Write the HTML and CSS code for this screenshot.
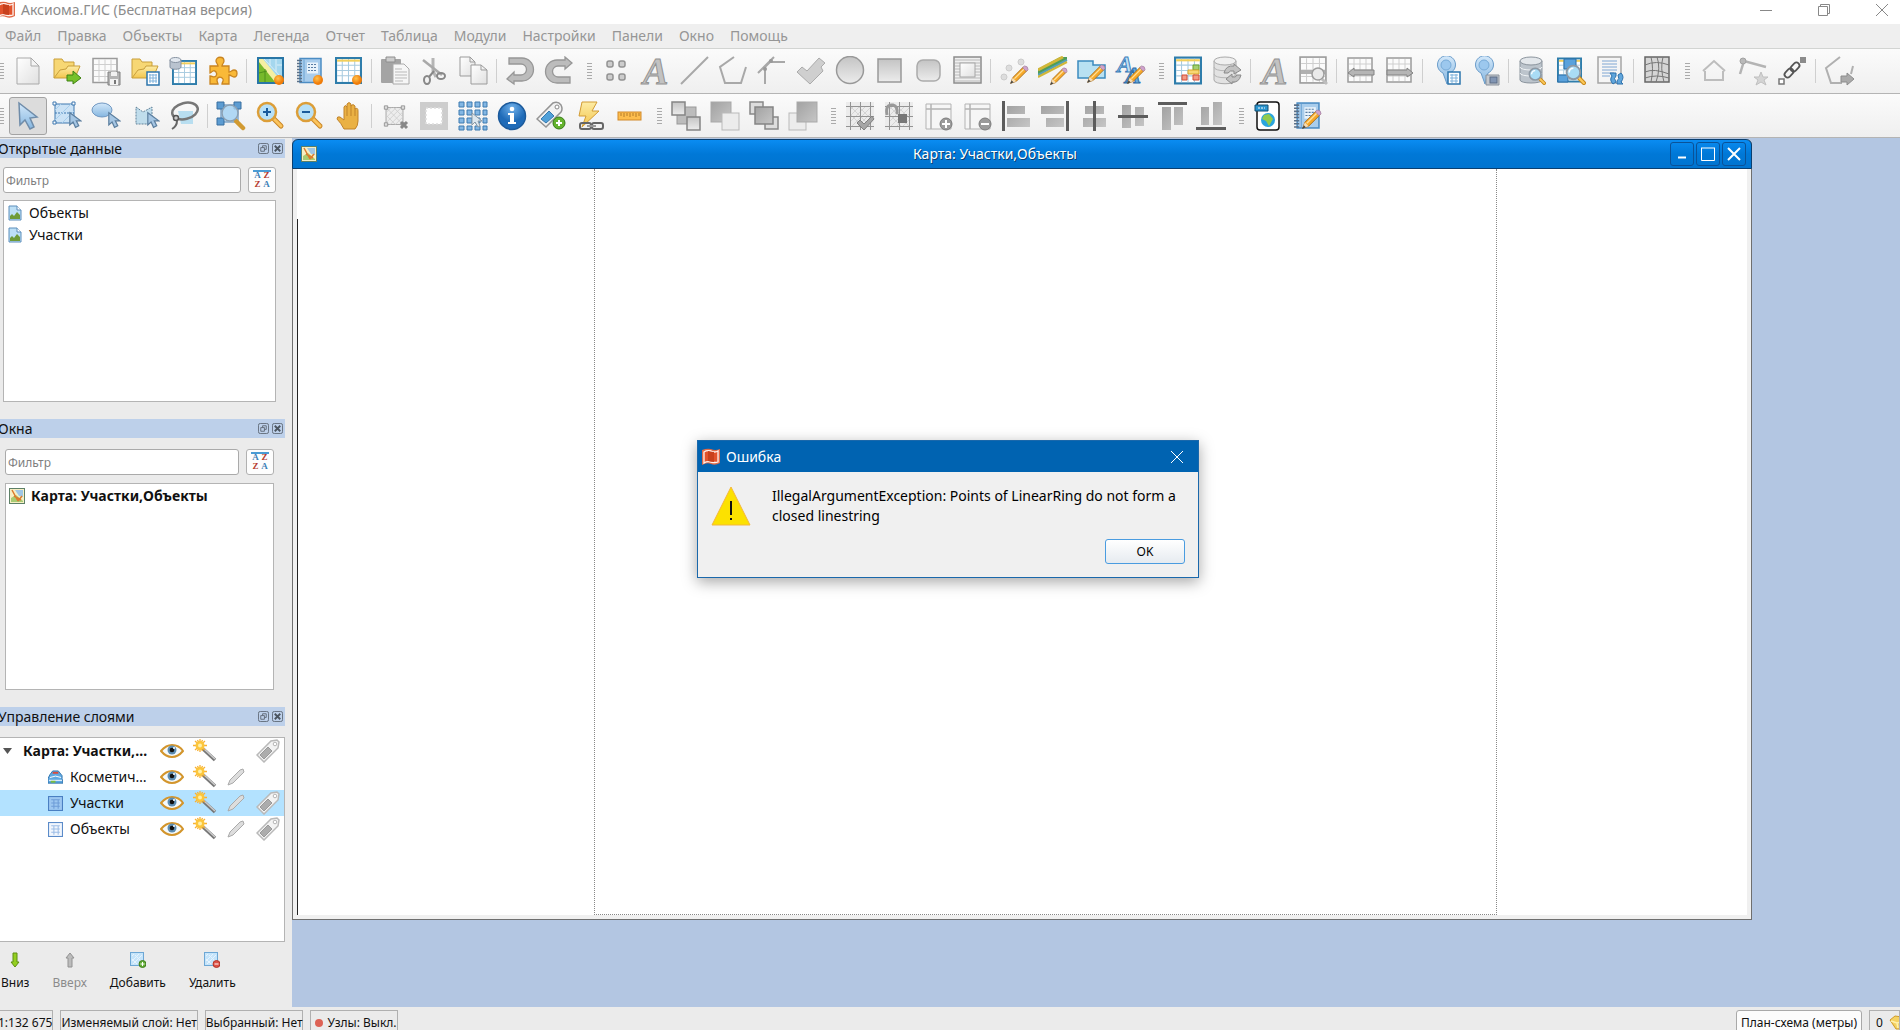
FILE: index.html
```html
<!DOCTYPE html>
<html lang="ru">
<head>
    <meta charset="UTF-8">
    <meta name="viewport" content="width=device-width, initial-scale=1.0">
    <title>Аксиома.ГИС (Бесплатная версия)</title>
    <link rel="stylesheet" href="styles.css">
</head>
<body>
    <!-- Icon sprite -->
    <svg class="sprite" width="0" height="0" aria-hidden="true">
        <defs>
            <linearGradient id="g-gray" x1="0" y1="0" x2="0" y2="1"><stop offset="0" stop-color="#c4c4c4"/><stop offset="1" stop-color="#ececec"/></linearGradient>
            <linearGradient id="g-dark" x1="0" y1="0" x2="1" y2="1"><stop offset="0" stop-color="#a2a2a2"/><stop offset="1" stop-color="#c6c6c6"/></linearGradient>
            <linearGradient id="g-page" x1="0" y1="0" x2="1" y2="1"><stop offset="0" stop-color="#fff"/><stop offset="1" stop-color="#e0e0e0"/></linearGradient>
            <linearGradient id="g-yellow" x1="0" y1="0" x2="0" y2="1"><stop offset="0" stop-color="#fdeca6"/><stop offset="1" stop-color="#f3c64d"/></linearGradient>
            <linearGradient id="g-blue" x1="0" y1="0" x2="0" y2="1"><stop offset="0" stop-color="#d3e8fa"/><stop offset="1" stop-color="#85b6e0"/></linearGradient>
            <radialGradient id="g-ball" cx=".4" cy=".35"><stop offset="0" stop-color="#ffc24d"/><stop offset="1" stop-color="#f07c09"/></radialGradient>
            <radialGradient id="g-info" cx=".5" cy=".2"><stop offset="0" stop-color="#6fb0ea"/><stop offset="1" stop-color="#1f6bb8"/></radialGradient>
        </defs>

        <!-- shared parts -->
        <symbol id="p-pencil" viewBox="0 0 22 22"><path d="M2 20L4 14L16 2L20 6L8 18Z" fill="#f7a928" stroke="#a86d1c"/><path d="M6 15L17 4" stroke="#ffe09a" stroke-width="1.5"/><path d="M2 20L4 14L8 18Z" fill="#f5dcb4"/><path d="M1 21L3 17L5 19Z" fill="#444"/><path d="M15 3L17 1Q21 1 21 5L19 7Z" fill="#cfa2cc" stroke="#9c7a9c" stroke-width=".7"/></symbol>
        <symbol id="p-cursor" viewBox="0 0 16 20"><path d="M1 1V16L5 12.500L8 19L12 17L9 11H14.500Z" fill="#a5c6e4" stroke="#5c7f9f" stroke-width="1.500"/></symbol>
        <symbol id="p-lens" viewBox="0 0 20 20"><path d="M12 12L18 18" stroke="#c98a1c" stroke-width="4" stroke-linecap="round"/><path d="M12 12L18 18" stroke="#fcc95a" stroke-width="2" stroke-linecap="round"/><circle cx="8" cy="8" r="6.500" fill="#a9dcf5" stroke="#8d99a5" stroke-width="1.800"/><path d="M4 8A4 4 0 0 1 8 4" fill="none" stroke="#fff" stroke-width="1.500"/></symbol>
        <symbol id="p-grid" viewBox="0 0 26 26"><rect x="1" y="1" width="24" height="24" fill="#fff" stroke="#2e7dab" stroke-width="2"/><path d="M2 8H24M2 13H24M2 18H24M7 2V24M13 2V24M19 2V24" stroke="#a8cbe0"/><path d="M2 3.500H24" stroke="#f2cf5b" stroke-width="2"/></symbol>
        <symbol id="p-ggrid" viewBox="0 0 26 26"><rect x="1" y="1" width="24" height="24" fill="#fbfbfb" stroke="#9b9b9b" stroke-width="1.500"/><path d="M2 7H24M2 13H24M2 19H24M7 2V24M13 2V24M19 2V24" stroke="#cfcfcf"/></symbol>
        <symbol id="p-folder" viewBox="0 0 28 23"><path d="M1 21V2H9L11 5H21V9" fill="#f7d774" stroke="#c99f3b"/><path d="M1 21L7 13L13 12L15 9H27L22 21Z" fill="url(#g-yellow)" stroke="#c99f3b"/></symbol>
        <symbol id="p-notebook" viewBox="0 0 26 26"><rect x="4" y="1" width="21" height="24" fill="#a9cdec" stroke="#4c8dc4" stroke-width="1.500"/><path d="M8 2V24" stroke="#6ba4d4"/><path d="M1 3H6M1 6H6M1 9H6M1 12H6M1 15H6M1 18H6M1 21H6M1 24H6" stroke="#5a7088" stroke-width="1.500"/><rect x="11" y="5" width="11" height="11" fill="#e9f3fb"/><path d="M12 7H20M12 10H21M12 13H21" stroke="#5a7ea5" stroke-dasharray="2 1"/></symbol>
        <symbol id="p-nodes" viewBox="0 0 26 26"><path d="M3 3H23V23H3Z" fill="#ededed" stroke="#9a9a9a"/><path d="M3 9L9 3M3 15L15 3M3 21L21 3M8 23L23 8M14 23L23 14M3 3L23 23M12 3L23 14M3 12L14 23" stroke="#cdcdcd"/><path d="M1 1H5V5H1ZM21 1H25V5H21ZM1 21H5V25H1ZM21 21H25V25H21Z" fill="#ddd" stroke="#8d8d8d"/></symbol>
        <symbol id="p-snapgrid" viewBox="0 0 30 30"><path d="M1 1H29V29H1Z" fill="#ececec"/><path d="M9 5L5 9M15 5L5 15M21 5L5 21M25 7L7 25M25 13L13 25M25 19L19 25M5 5L25 25M13 5L25 17M5 13L17 25" stroke="#d4d4d4"/><path d="M1 5.500H29M1 15.500H29M1 25.500H29M5.500 1V29M15.500 1V29M25.500 1V29" stroke="#949494"/></symbol>

        <!-- main toolbar -->
        <symbol id="i-new" viewBox="0 0 30 30"><path d="M4 2H18L26 10V28H4Z" fill="url(#g-page)" stroke="#a9a9a9"/><path d="M18 2V10H26Z" fill="#f4f4f4" stroke="#a9a9a9"/></symbol>
        <symbol id="i-open" viewBox="0 0 30 30"><use href="#p-folder" x="1" y="1" width="28" height="23"/><path d="M15 19H21V15L29 22L21 28V25H15Z" fill="#77c12a" stroke="#3f8212"/></symbol>
        <symbol id="i-save" viewBox="0 0 30 30"><use href="#p-ggrid" x="1" y="1" width="26" height="27"/><path d="M17 16H29V29H17Z" fill="#b4b4b4" stroke="#808080"/><path d="M20 16H26V20H20ZM19 23H27V29H19Z" fill="#f2f2f2"/><path d="M24 24V28" stroke="#777" stroke-width="2"/></symbol>
        <symbol id="i-opentab" viewBox="0 0 30 30"><use href="#p-folder" x="1" y="1" width="28" height="23"/><rect x="17" y="16" width="12" height="13" fill="#fff" stroke="#2d75ad" stroke-width="1.500"/><path d="M19 19H27M19 22H27M19 25H27M20 18V27M23 18V27M26 18V27" stroke="#7fb2db"/></symbol>
        <symbol id="i-dbtab" viewBox="0 0 30 30"><use href="#p-grid" x="2" y="4" width="27" height="25"/><path d="M1 4V11C1 14 12 14 12 11V4" fill="#b9c3cf" stroke="#8591a0"/><ellipse cx="6.500" cy="4" rx="5.500" ry="2.500" fill="#e2e8ef" stroke="#8591a0"/></symbol>
        <symbol id="i-puzzle" viewBox="0 0 30 30"><path d="M2 10H10C10 8 8 7 8 5C8 0 16 0 16 5C16 7 14 8 14 10H21V16C23 16 24 14 26 14C30 14 30 21 26 21C24 21 23 19 21 19V28H14C14 26 16 25 15 23C13 20 9 21 9 24C9 26 10 27 10 28H2V20C5 20 6 22 8 20C10 17 7 14 5 15C3 16 3 17 2 17Z" fill="#f9b938" stroke="#c98420" stroke-width="1.300"/></symbol>
        <symbol id="i-newmap" viewBox="0 0 30 30"><rect x="3" y="2" width="25" height="25" fill="#a4d7ee" stroke="#2876a6" stroke-width="2"/><path d="M4 3H8L26 25V26H4Z" fill="#f5efa2"/><path d="M4 6V26H20Z" fill="#77b92b"/><path d="M9 3L27 22M15 3V10M21 3V16M22 9H27" stroke="#d9eff8"/><path d="M4 17L12 15M10 13V26" stroke="#4e8f1c"/><circle cx="24" cy="24" r="5" fill="url(#g-ball)"/></symbol>
        <symbol id="i-newreport" viewBox="0 0 30 30"><use href="#p-notebook" x="2" y="1" width="26" height="27"/><circle cx="24" cy="24" r="5" fill="url(#g-ball)"/></symbol>
        <symbol id="i-newtab" viewBox="0 0 30 30"><use href="#p-grid" x="2" y="1" width="27" height="27"/><circle cx="24" cy="24" r="5" fill="url(#g-ball)"/></symbol>
        <symbol id="i-paste" viewBox="0 0 30 30"><rect x="1" y="3" width="20" height="24" rx="1" fill="#a4a4a4"/><path d="M6 1H15V6H6Z" fill="#ccc" stroke="#8e8e8e"/><path d="M13 8H24L29 13V28H13Z" fill="#f6f6f6" stroke="#aaa"/><path d="M15 13H22M15 16H27M15 19H27M15 22H27M15 25H23" stroke="#b9b9b9"/></symbol>
        <symbol id="i-cut" viewBox="0 0 30 30"><path d="M14 2V15L17 21" fill="none" stroke="#b5b5b5" stroke-width="3"/><path d="M4 4L23 19" stroke="#a9a9a9" stroke-width="2.500"/><path d="M15 15L10 21" stroke="#888" stroke-width="2"/><ellipse cx="8" cy="24" rx="3" ry="4" fill="none" stroke="#888" stroke-width="2"/><ellipse cx="22" cy="20" rx="4" ry="3" fill="none" stroke="#888" stroke-width="2"/></symbol>
        <symbol id="i-copy" viewBox="0 0 30 30"><path d="M2 1H12L17 6V20H2Z" fill="url(#g-page)" stroke="#9b9b9b"/><path d="M12 1V6H17" fill="none" stroke="#9b9b9b"/><path d="M13 9H23L29 14V28H13Z" fill="url(#g-page)" stroke="#9b9b9b"/><path d="M23 9V14H29" fill="none" stroke="#9b9b9b"/></symbol>
        <symbol id="i-undo" viewBox="0 0 30 30"><path d="M4 2H17A10.500 10.500 0 0 1 17 25H9V28L2 23L9 16V19H16A5 5 0 0 0 16 8H4Z" fill="#bcbcbc" stroke="#979797" stroke-width="1.300"/></symbol>
        <symbol id="i-redo" viewBox="0 0 30 30"><path d="M26 27H13A10.500 10.500 0 0 1 13 4H21V1L28 7L21 13V10H14A5 5 0 0 0 14 21H26Z" fill="#bcbcbc" stroke="#979797" stroke-width="1.300"/></symbol>
        <symbol id="i-points" viewBox="0 0 30 30"><g fill="#ccc" stroke="#929292" stroke-width="1.500"><rect x="6" y="5" width="6" height="6" rx="2"/><rect x="18" y="5" width="6" height="6" rx="2"/><rect x="6" y="18" width="6" height="6" rx="2"/><rect x="18" y="18" width="6" height="6" rx="2"/></g></symbol>
        <symbol id="i-line" viewBox="0 0 30 30"><path d="M2 28L29 1" stroke="#a8a8a8" stroke-width="2"/></symbol>
        <symbol id="i-polygon" viewBox="0 0 30 30"><path d="M16 1L2 11L7 27H23L28 11" fill="none" stroke="#a8a8a8" stroke-width="2"/></symbol>
        <symbol id="i-polyline" viewBox="0 0 30 30"><path d="M1 17L17 1M8 28V11L13 6H28" fill="none" stroke="#a8a8a8" stroke-width="2"/><circle cx="8" cy="13" r="2" fill="#999"/><circle cx="14" cy="5" r="2" fill="#999"/></symbol>
        <symbol id="i-region" viewBox="0 0 30 30"><path d="M1 16L6 11L11 15L23 2L29 7L25 11L27 15L14 28Z" fill="#cfcfcf" stroke="#ababab"/></symbol>
        <symbol id="i-ellipse" viewBox="0 0 30 30"><circle cx="15" cy="14" r="13.500" fill="url(#g-gray)" stroke="#999" stroke-width="1.500"/></symbol>
        <symbol id="i-rect" viewBox="0 0 30 30"><rect x="4" y="3" width="23" height="23" fill="url(#g-gray)" stroke="#999" stroke-width="1.500"/></symbol>
        <symbol id="i-rrect" viewBox="0 0 30 30"><rect x="4" y="4" width="23" height="21" rx="6" fill="url(#g-gray)" stroke="#aaa" stroke-width="1.500"/></symbol>
        <symbol id="i-frame" viewBox="0 0 30 30"><rect x="2" y="1" width="27" height="26" fill="#efefef" stroke="#8c8c8c" stroke-width="1.500"/><path d="M3 4H28M3 7H28M3 10H28M3 13H28M3 16H28M3 19H28M3 22H28M3 25H28" stroke="#b9b9b9"/><rect x="8" y="7" width="15" height="14" fill="url(#g-page)" stroke="#a6a6a6"/></symbol>
        <symbol id="i-pointstyle" viewBox="0 0 30 30"><circle cx="5" cy="21" r="3" fill="#ddd" stroke="#ccc"/><circle cx="10" cy="12" r="3" fill="#ddd" stroke="#ccc"/><circle cx="22" cy="6" r="3" fill="#ddd" stroke="#ccc"/><use href="#p-pencil" x="10" y="9" width="20" height="20"/></symbol>
        <symbol id="i-linestyle" viewBox="0 0 30 30"><path d="M0 13L22 1H29V4L0 19Z" fill="#4f9d58"/><path d="M0 14L25 1" stroke="#d2b738" stroke-width="3"/><path d="M0 19L29 4" stroke="#54a0b9" stroke-width="2"/><path d="M0 21L29 6" stroke="#d2b738" stroke-width="2"/><use href="#p-pencil" x="11" y="11" width="19" height="19"/></symbol>
        <symbol id="i-regionstyle" viewBox="0 0 30 30"><path d="M1 5H16V9H28V22H1Z" fill="#b8e1f2" stroke="#3b8bbf" stroke-width="1.500"/><use href="#p-pencil" x="9" y="8" width="20" height="20"/></symbol>
        <symbol id="i-thematic" viewBox="0 0 30 30"><use href="#p-grid" x="1" y="0" width="28" height="29"/><path d="M20 9H26V14H20Z" fill="#a3cf73" stroke="#69a32f"/><path d="M15 14H26V18H15Z" fill="#f8d773" stroke="#d9a72c"/><path d="M9 19H14V24H9ZM20 19H26V24H20Z" fill="#f39a85" stroke="#d44c35"/></symbol>
        <symbol id="i-dbrefresh" viewBox="0 0 30 30"><path d="M2 5V24C2 29 24 29 24 24V5" fill="#e2e2e2" stroke="#a9a9a9"/><ellipse cx="13" cy="5" rx="11" ry="4" fill="#f0f0f0" stroke="#a9a9a9"/><path d="M2 11C2 16 24 16 24 11M2 18C2 23 24 23 24 18" fill="none" stroke="#b5b5b5"/><path d="M12 17Q14 9 22 10V8L29 14L22 18V15Q18 14 16 17ZM29 19Q27 27 20 26V28L14 23L20 18V21Q24 22 25 19Z" fill="#c2c2c2" stroke="#8a8a8a"/></symbol>
        <symbol id="i-tabsearch" viewBox="0 0 30 30"><use href="#p-ggrid" x="1" y="0" width="28" height="28"/><path d="M3 14H27V18H3Z" fill="#b0b0b0"/><path d="M24 23L29 28" stroke="#bdbdbd" stroke-width="3"/><circle cx="20" cy="18" r="6" fill="#eaeaea" stroke="#9d9d9d" stroke-width="1.500"/></symbol>
        <symbol id="i-tableft" viewBox="0 0 30 30"><use href="#p-ggrid" x="2" y="1" width="26" height="26"/><path d="M3 17L9 12V14H29V19H9V21Z" fill="#b5b5b5" stroke="#828282"/></symbol>
        <symbol id="i-tabright" viewBox="0 0 30 30"><use href="#p-ggrid" x="2" y="1" width="26" height="26"/><path d="M29 17L23 12V14H3V19H23V21Z" fill="#b5b5b5" stroke="#828282"/></symbol>
        <symbol id="i-pintab" viewBox="0 0 30 30"><path d="M16 28L12 17A9 9 0 1 1 19 17Z" fill="url(#g-blue)" stroke="#6a9cca"/><circle cx="15" cy="9" r="5" fill="#9cc8ee" stroke="#78abd8"/><rect x="17" y="16" width="12" height="12" fill="#fff" stroke="#2d75ad" stroke-width="1.500"/><path d="M19 19H27M19 22H27M19 25H27M21 18V27M25 18V27" stroke="#7fb2db"/></symbol>
        <symbol id="i-pinmap" viewBox="0 0 30 30"><path d="M15 28L11 17A9 9 0 1 1 18 17Z" fill="url(#g-blue)" stroke="#6a9cca"/><circle cx="14" cy="9" r="5" fill="#9cc8ee" stroke="#78abd8"/><path d="M16 19H29V29H16Z" fill="#c3c8ce" stroke="#8b929b"/><rect x="20" y="21" width="7" height="6" fill="#8195b3" stroke="#5c6c85"/></symbol>
        <symbol id="i-dbsearch" viewBox="0 0 30 30"><path d="M3 5V24C3 28 25 28 25 24V5" fill="#bcc4cc" stroke="#8b949d"/><ellipse cx="14" cy="5" rx="11" ry="4" fill="#e3e7eb" stroke="#8b949d"/><path d="M3 11C3 15 25 15 25 11M3 17C3 21 25 21 25 17" fill="none" stroke="#f0f3f6"/><use href="#p-lens" x="11" y="11" width="18" height="18"/></symbol>
        <symbol id="i-mapsearch" viewBox="0 0 30 30"><use href="#p-grid" x="1" y="0" width="25" height="28"/><path d="M8 3H20V13H8ZM2 19H12V26H2Z" fill="#5aa2dc" stroke="#2b6ea7"/><use href="#p-lens" x="9" y="8" width="21" height="21"/></symbol>
        <symbol id="i-docrefresh" viewBox="0 0 30 30"><rect x="3" y="1" width="23" height="26" fill="#f5f5f5" stroke="#a5a5a5" stroke-width="1.500"/><path d="M7 5H22M7 8H22M7 11H22M7 14H22M7 17H19M7 20H15" stroke="#7fa6d3"/><path d="M15 17H21V20Q18 22 21 26L18 28Q14 24 17 20ZM28 28H22V25Q25 23 23 19L26 17Q30 21 26 26Z" fill="#60a6dc" stroke="#2d71ac"/></symbol>
        <symbol id="i-warp" viewBox="0 0 30 30"><rect x="3" y="1" width="24" height="25" fill="#d5d5d5" stroke="#666" stroke-width="1.500"/><path d="M3 9Q14 4 27 9M3 16Q12 12 27 18M3 22Q14 18 27 22M9 1Q12 12 9 26M15 1Q19 12 14 26M21 1Q18 12 22 26" fill="none" stroke="#777"/></symbol>
        <symbol id="i-house" viewBox="0 0 30 30"><path d="M6 15V24H24V15M4 15L15 5L26 15" fill="none" stroke="#bdbdbd" stroke-width="2"/></symbol>
        <symbol id="i-nodestar" viewBox="0 0 30 30"><path d="M2 18L6 5L28 11" fill="none" stroke="#b4b4b4" stroke-width="2.500"/><circle cx="5" cy="5" r="3" fill="#b9b9b9" stroke="#a2a2a2"/><path d="M23 16L25 21L30 21L26 24L28 29L23 26L18 29L20 24L16 21L21 21Z" fill="#d4d4d4" stroke="#c0c0c0"/></symbol>
        <symbol id="i-chain" viewBox="0 0 30 30"><rect x="23" y="1" width="6" height="6" fill="#8b8b8b"/><rect x="2" y="23" width="5" height="5" fill="#fff" stroke="#777" stroke-width="1.500"/><g fill="none" stroke="#555" stroke-width="1.800"><rect x="-5" y="-3" width="10" height="6" rx="3" transform="translate(18 11) rotate(-45)"/><rect x="-5" y="-3" width="10" height="6" rx="3" transform="translate(12 17) rotate(-45)"/></g></symbol>
        <symbol id="i-polyarrow" viewBox="0 0 30 30"><path d="M16 1L2 12L7 27H18M29 10L27 18" fill="none" stroke="#b0b0b0" stroke-width="2"/><path d="M17 20H23V17L30 23L23 29V26H17Z" fill="#aaa" stroke="#8c8c8c"/></symbol>

        <!-- map tools -->
        <symbol id="i-cursor" viewBox="0 0 30 30"><path d="M6 2L7 24L12 19L17 28L21 26L17 17L24 16Z" fill="url(#g-blue)" stroke="#6f8ca9" stroke-width="1.500"/></symbol>
        <symbol id="i-selrect" viewBox="0 0 30 30"><rect x="3" y="3" width="19" height="19" fill="#cbe2f5" stroke="#3f79b0"/><path d="M3 12H22" stroke="#3f79b0" stroke-dasharray="2 1"/><path d="M3 9L9 3M3 19L19 3M10 22L22 10" stroke="#a6cdec"/><path d="M1 1H4V4H1ZM20 1H23V4H20ZM1 20H4V23H1Z" fill="#fff" stroke="#3f79b0"/><use href="#p-cursor" x="17" y="9" width="13" height="20"/></symbol>
        <symbol id="i-selell" viewBox="0 0 30 30"><ellipse cx="11" cy="9" rx="10" ry="7" fill="url(#g-blue)" stroke="#7097c1"/><use href="#p-cursor" x="17" y="9" width="13" height="20"/></symbol>
        <symbol id="i-selpoly" viewBox="0 0 30 30"><path d="M6 6L13 11L22 6V19L18 23H6Z" fill="#c0ddec" stroke="#62839a" stroke-dasharray="2 1"/><use href="#p-cursor" x="17" y="9" width="13" height="20"/></symbol>
        <symbol id="i-lasso" viewBox="0 0 30 30"><path d="M9 10H24V23H12Z" fill="#b8def0"/><ellipse cx="16" cy="10" rx="13" ry="8" transform="rotate(-14 16 10)" fill="none" stroke="#777" stroke-width="2.500"/><circle cx="7" cy="17" r="2.500" fill="#ccc" stroke="#555" stroke-width="1.500"/><path d="M8 20Q8 25 3 28" fill="none" stroke="#666" stroke-width="2"/></symbol>
        <symbol id="i-zoomsel" viewBox="0 0 30 30"><rect x="5" y="4" width="17" height="17" fill="#d7ebf9" stroke="#4a82b5"/><path d="M1 1H8V8H1ZM18 1H25V8H18ZM1 17H8V24H1Z" fill="#5c9cd2" stroke="#386f9f"/><path d="M20 20L27 27" stroke="#d19a32" stroke-width="4.500" stroke-linecap="round"/><circle cx="14" cy="12" r="8" fill="#a8d3f2" fill-opacity=".8" stroke="#8ba0b3" stroke-width="1.500"/></symbol>
        <symbol id="i-zoomin" viewBox="0 0 30 30"><path d="M19 18L26 25" stroke="#c98524" stroke-width="5" stroke-linecap="round"/><path d="M19 18L26 25" stroke="#fbc45d" stroke-width="3" stroke-linecap="round"/><circle cx="12" cy="11" r="9" fill="#b7e0f7" stroke="#dc9e38" stroke-width="2.500"/><path d="M8 11H16M12 7V15" stroke="#195a9b" stroke-width="2"/></symbol>
        <symbol id="i-zoomout" viewBox="0 0 30 30"><path d="M19 18L26 25" stroke="#c98524" stroke-width="5" stroke-linecap="round"/><path d="M19 18L26 25" stroke="#fbc45d" stroke-width="3" stroke-linecap="round"/><circle cx="12" cy="11" r="9" fill="#b7e0f7" stroke="#dc9e38" stroke-width="2.500"/><path d="M8 11H16" stroke="#195a9b" stroke-width="2"/></symbol>
        <symbol id="i-hand" viewBox="0 0 30 30"><path d="M11 28Q8 22 4 18Q4 15 7 16L11 19V6Q12 3 14 6V3Q16 0 18 3V5Q20 2 22 5V8Q25 6 25 10V20Q25 25 22 28Z" fill="#eab144" stroke="#c1832a"/><path d="M14 6V15M18 4V15M22 7V15" stroke="#c1832a"/></symbol>
        <symbol id="i-desel" viewBox="0 0 30 30"><use href="#p-nodes" x="3" y="4" width="23" height="22"/><path d="M21 21L27 27M27 21L21 27" stroke="#888" stroke-width="3"/></symbol>
        <symbol id="i-invsel" viewBox="0 0 30 30"><rect x="1" y="1" width="28" height="28" fill="#cdcdcd"/><rect x="7" y="7" width="16" height="16" fill="#fff" stroke="#ddd" stroke-width="1.500" stroke-dasharray="2 2"/></symbol>
        <symbol id="i-selall" viewBox="0 0 30 30"><path d="M1 1H6V6H1ZM9 1H14V6H9ZM17 1H22V6H17ZM25 1H29V6H25ZM1 9H6V14H1ZM9 9H14V14H9ZM17 9H22V14H17ZM25 9H29V14H25ZM1 17H6V22H1ZM9 17H14V22H9ZM17 17H22V22H17ZM25 17H29V22H25ZM1 25H6V29H1ZM9 25H14V29H9ZM17 25H22V29H17ZM25 25H29V29H25Z" fill="#83b7e4" stroke="#3d7ab0"/><path d="M14 12V24L17 21L20 26L22 25L20 20H24Z" fill="#dce7ef" stroke="#8a99a5"/></symbol>
        <symbol id="i-info" viewBox="0 0 30 30"><circle cx="15" cy="15" r="13.500" fill="url(#g-info)" stroke="#1c5a9b" stroke-width="1.500"/><circle cx="15" cy="8" r="2.300" fill="#fff"/><path d="M11 12H17V21H19V23H11V21H13V14H11Z" fill="#fff"/></symbol>
        <symbol id="i-tagadd" viewBox="0 0 30 30"><path d="M1 18L17 2Q22 0 25 4Q27 8 25 11L10 26Z" fill="#f2f2f2" stroke="#949494" stroke-width="1.500"/><path d="M5 18L13 10L18 15L10 22Z" fill="#50a0d8" stroke="#3579ae"/><circle cx="21" cy="6" r="2" fill="#fff" stroke="#888"/><circle cx="23" cy="22" r="6" fill="#65b32e" stroke="#347a16"/><path d="M20 22H26M23 19V25" stroke="#fff" stroke-width="2"/></symbol>
        <symbol id="i-hotlink" viewBox="0 0 30 30"><path d="M7 1H22L17 10H24L7 26L11 15H4Z" fill="url(#g-yellow)" stroke="#d29c35"/><rect x="5" y="22" width="11" height="6" rx="2" fill="none" stroke="#666" stroke-width="2"/><rect x="17" y="22" width="11" height="6" rx="2" fill="none" stroke="#666" stroke-width="2"/><path d="M12 25H21" stroke="#999" stroke-width="2"/></symbol>
        <symbol id="i-ruler" viewBox="0 0 30 30"><rect x="4" y="11" width="23" height="8" fill="#fdbd4d" stroke="#d1892a"/><path d="M7 12V15M10 12V16M13 12V15M16 12V16M19 12V15M22 12V16M25 12V15" stroke="#b57c2a"/></symbol>
        <symbol id="i-order1" viewBox="0 0 30 30"><rect x="6" y="6" width="19" height="17" fill="#bcbcbc" stroke="#999"/><rect x="1" y="1" width="13" height="13" fill="url(#g-gray)" stroke="#858585" stroke-width="1.500"/><rect x="16" y="16" width="13" height="13" fill="url(#g-gray)" stroke="#858585" stroke-width="1.500"/></symbol>
        <symbol id="i-order2" viewBox="0 0 30 30"><rect x="1" y="1" width="20" height="20" fill="url(#g-dark)" stroke="#a9a9a9"/><rect x="12" y="12" width="17" height="17" fill="#ececec" stroke="#b9b9b9"/></symbol>
        <symbol id="i-order3" viewBox="0 0 30 30"><rect x="1" y="1" width="13" height="12" fill="#ddd" stroke="#888" stroke-width="1.500"/><rect x="16" y="16" width="13" height="12" fill="#ddd" stroke="#888" stroke-width="1.500"/><rect x="6" y="6" width="18" height="17" fill="url(#g-dark)" stroke="#858585" stroke-width="1.500"/></symbol>
        <symbol id="i-order4" viewBox="0 0 30 30"><rect x="1" y="12" width="17" height="17" fill="#ececec" stroke="#b9b9b9"/><rect x="9" y="1" width="20" height="20" fill="url(#g-dark)" stroke="#a9a9a9"/></symbol>
        <symbol id="i-gridok" viewBox="0 0 30 30"><use href="#p-snapgrid" width="30" height="30"/><path d="M12 22L15 19L19 23L27 15L29 18L19 29Z" fill="#a6a6a6" stroke="#808080"/></symbol>
        <symbol id="i-gridsnap" viewBox="0 0 30 30"><use href="#p-snapgrid" width="30" height="30"/><rect x="14" y="13" width="9" height="9" fill="#777"/><path d="M3 14Q1 3 9 4Q14 5 13 13" fill="none" stroke="#999" stroke-width="3"/></symbol>
        <symbol id="i-coladd" viewBox="0 0 30 30"><path d="M3 3H28V28H3Z" fill="#f6f6f6" stroke="#b3b3b3"/><path d="M3 8H28M8 3V28" stroke="#b3b3b3" stroke-width="1.500"/><circle cx="23" cy="23" r="6" fill="#9b9b9b" stroke="#7d7d7d"/><path d="M19 23H27M23 19V27" stroke="#fff" stroke-width="2"/></symbol>
        <symbol id="i-coldel" viewBox="0 0 30 30"><path d="M3 3H28V28H3Z" fill="#f6f6f6" stroke="#b3b3b3"/><path d="M3 8H28M8 3V28" stroke="#b3b3b3" stroke-width="1.500"/><circle cx="23" cy="23" r="6" fill="#9b9b9b" stroke="#7d7d7d"/><path d="M19 23H27" stroke="#fff" stroke-width="2"/></symbol>
        <symbol id="i-alleft" viewBox="0 0 30 30"><path d="M1 0H4V30H1Z" fill="#5c5c5c"/><path d="M6 5H24V13H6ZM6 17H29V26H6Z" fill="url(#g-dark)"/></symbol>
        <symbol id="i-alright" viewBox="0 0 30 30"><path d="M26 0H29V30H26Z" fill="#5c5c5c"/><path d="M1 5H24V13H1ZM6 17H24V26H6Z" fill="url(#g-dark)"/></symbol>
        <symbol id="i-alcenter" viewBox="0 0 30 30"><path d="M6 5H25V13H6ZM4 17H27V26H4Z" fill="url(#g-dark)"/><path d="M14 0H17V30H14Z" fill="#5c5c5c"/></symbol>
        <symbol id="i-almiddle" viewBox="0 0 30 30"><path d="M4 4H13V27H4ZM17 6H26V25H17Z" fill="url(#g-dark)"/><path d="M0 14H30V17H0Z" fill="#5c5c5c"/></symbol>
        <symbol id="i-altop" viewBox="0 0 30 30"><path d="M5 6H14V29H5ZM17 6H26V24H17Z" fill="url(#g-dark)"/><path d="M1 1H30V4H1Z" fill="#5c5c5c"/></symbol>
        <symbol id="i-albottom" viewBox="0 0 30 30"><path d="M5 6H13V24H5ZM17 1H26V24H17Z" fill="url(#g-dark)"/><path d="M0 26H30V29H0Z" fill="#5c5c5c"/></symbol>
        <symbol id="i-xml" viewBox="0 0 30 30"><rect x="4" y="1" width="22" height="28" rx="3" fill="#fff" stroke="#111" stroke-width="1.500"/><path d="M2 4H15V10H2Z" fill="#2b95cf" stroke="#124e72"/><path d="M5 7H12" stroke="#fff" stroke-dasharray="2 1"/><circle cx="15" cy="19" r="7" fill="#29a5de"/><path d="M11 14L16 13L20 18L16 25L13 20L9 18Z" fill="#93cb4c"/></symbol>
        <symbol id="i-noteedit" viewBox="0 0 30 30"><use href="#p-notebook" x="1" y="1" width="27" height="27"/><use href="#p-pencil" x="9" y="8" width="21" height="21"/></symbol>

        <!-- small icons -->
        <symbol id="s-app" viewBox="0 0 20 18"><path d="M1 2Q6 0 10 1Q14 3 19 1V15Q14 18 10 16Q6 14 1 17Z" fill="#e06a48"/><path d="M3 4Q6 2 10 3Q14 5 17 3V14Q14 15 10 14Q6 13 3 15Z" fill="#e2532c" stroke="#fff3ee" stroke-width="1.300"/><path d="M7 3Q10 4 13 4V14Q10 14 7 13Z" fill="#c8411d"/></symbol>
        <symbol id="s-map" viewBox="0 0 16 16"><rect x=".5" y=".5" width="15" height="15" fill="#f7efc4" stroke="#5d8067"/><path d="M6 2H14V9L10 8Z" fill="#9fc6e6"/><path d="M2 10L7 7L14 13V14H2Z" fill="#a8cc73"/><path d="M3 2L9 13M5 8L12 12M9 13L13 8" stroke="#db7b2d" stroke-width="1.500"/></symbol>
        <symbol id="s-image" viewBox="0 0 14 16"><path d="M1 1H9L13 5V15H1Z" fill="#bde0f6" stroke="#5d8ebb"/><path d="M9 1V5H13" fill="#fff" stroke="#5d8ebb"/><path d="M2 11L4 9L6 11L9 7L12 10V14H2Z" fill="#6f9b37"/></symbol>
        <symbol id="s-eye" viewBox="0 0 24 18"><path d="M1 9Q6 3 12 3Q19 3 23 9Q18 15 12 15Q6 15 1 9Z" fill="#f4fafd" stroke="#d3952c" stroke-width="2"/><circle cx="12" cy="8" r="4.500" fill="#5d8db1"/><circle cx="12" cy="8" r="2.300" fill="#111"/><circle cx="14" cy="6" r="1" fill="#fff"/></symbol>
        <symbol id="s-wand" viewBox="0 0 24 24"><path d="M9 9L22 21" stroke="#777" stroke-width="3.500"/><path d="M9 8L22 20" stroke="#ccc" stroke-width="1.500"/><path d="M7 0V13M0 6.500H14M2 2L12 11M12 2L2 11M4.500 1L9.500 12M9.500 1L4.500 12" stroke="#f8b133" stroke-width="1.300"/><circle cx="7" cy="6.500" r="4.500" fill="#fcc63c"/><circle cx="7" cy="6.500" r="2" fill="#fff0a8"/></symbol>
        <symbol id="s-edit" viewBox="0 0 18 18"><path d="M1 17L3 12L13 2L16 1L17 4L6 15Z" fill="#ddd" stroke="#aaa"/></symbol>
        <symbol id="s-tag" viewBox="0 0 24 24"><path d="M1 16L15 2L21 1L23 3L22 9L8 23Z" fill="#f3f3f3" stroke="#b9b9b9" stroke-width="1.500"/><path d="M4 16L12 8L16 12L8 20Z" fill="#acacac" stroke="#999"/><circle cx="19" cy="5" r="1.800" fill="#fff" stroke="#b5b5b5"/></symbol>
        <symbol id="s-cosmetic" viewBox="0 0 16 16"><path d="M2 5L5 1H11L15 6V9L16 14H0V9Z" fill="#5fa9e3" stroke="#2f73ad"/><path d="M5 2H11V4H5Z" fill="#d94c3d"/><path d="M2 8Q8 5 14 8M1 11H15" fill="none" stroke="#fff"/><path d="M3 12.500H8" stroke="#7bbd3d" stroke-width="2"/></symbol>
        <symbol id="s-table" viewBox="0 0 14 14"><rect x=".5" y=".5" width="13" height="13" fill="#f1f6fd" stroke="#5b8bc9"/><path d="M3 3.500H11M3 6.500H11M3 9.500H11M5.500 3V12M9.500 3V12" stroke="#9dbde6"/></symbol>
        <symbol id="s-tablesel" viewBox="0 0 14 14"><rect x=".5" y=".5" width="13" height="13" fill="#9dc7f1" stroke="#4a7fc2"/><path d="M3 3.500H11M3 6.500H11M3 9.500H11M5.500 3V12M9.500 3V12" stroke="#6e9dd8"/></symbol>
        <symbol id="s-down" viewBox="0 0 16 16"><path d="M6 1H10V10H12L8 15L4 10H6Z" fill="#94cf20" stroke="#5c8f10"/></symbol>
        <symbol id="s-up" viewBox="0 0 16 16"><path d="M6 15H10V6H12L8 1L4 6H6Z" fill="#bcbcbc" stroke="#929292"/></symbol>
        <symbol id="s-layeradd" viewBox="0 0 16 16"><rect x=".5" y=".5" width="13" height="13" fill="#c5e4fa" stroke="#6da7d5"/><path d="M2 4L4 2M2 9L9 2M3 12L12 3M8 12L12 8M2 7L7 12M5 3L12 10" stroke="#e6f3fd"/><circle cx="12.500" cy="12" r="3.500" fill="#63ad37" stroke="#3f7e1d"/><path d="M10.500 12H14.500M12.500 10V14" stroke="#fff"/></symbol>
        <symbol id="s-layerdel" viewBox="0 0 16 16"><rect x=".5" y=".5" width="13" height="13" fill="#c5e4fa" stroke="#6da7d5"/><path d="M2 4L4 2M2 9L9 2M3 12L12 3M8 12L12 8M2 7L7 12M5 3L12 10" stroke="#e6f3fd"/><circle cx="12.500" cy="12" r="3.500" fill="#de5145" stroke="#b0342a"/><path d="M10.500 12H14.500" stroke="#fff"/></symbol>
        <symbol id="s-float" viewBox="0 0 12 12"><rect x=".5" y=".5" width="11" height="11" rx="2" fill="none" stroke="#5f6976"/><path d="M5 5V3H9V7H7M3 5H7V9H3Z" fill="none" stroke="#5f6976"/></symbol>
        <symbol id="s-close" viewBox="0 0 12 12"><rect x=".5" y=".5" width="11" height="11" rx="2" fill="none" stroke="#5f6976"/><path d="M3 3L9 9M9 3L3 9" stroke="#4b5560" stroke-width="2"/></symbol>
        <symbol id="s-warning" viewBox="0 0 40 40"><path d="M20 1L39 39H1Z" fill="#fce100" stroke="#f4b63a"/><path d="M20 15V29" stroke="#111" stroke-width="2"/><path d="M19 32H21V34H19Z" fill="#111"/></symbol>
        <symbol id="s-coins" viewBox="0 0 20 16"><path d="M1 5L6 1L13 2L18 7L14 14L7 14Z" fill="#f5d262" stroke="#cf9b27"/><path d="M2 6L8 8L16 6M8 8L9 13" stroke="#fff1ad" stroke-width="1.500" fill="none"/></symbol>
    </svg>

    <header class="titlebar">
        <svg class="app-icon"><use href="#s-app"/></svg>
        <span class="titlebar-text">Аксиома.ГИС (Бесплатная версия)</span>
        <div class="titlebar-controls">
            <button type="button" aria-label="Свернуть"><svg width="12" height="12"><path d="M0 6.500H12" stroke="#888"/></svg></button>
            <button type="button" aria-label="Восстановить"><svg width="12" height="12"><path d="M.5 2.500H9.500V11.500H.5ZM2.500 2.500V.5H11.500V9.500H9.500" fill="none" stroke="#888"/></svg></button>
            <button type="button" aria-label="Закрыть"><svg width="12" height="12"><path d="M0 0L12 12M12 0L0 12" stroke="#888"/></svg></button>
        </div>
    </header>

    <nav class="menubar">
        <a href="#">Файл</a>
        <a href="#">Правка</a>
        <a href="#">Объекты</a>
        <a href="#">Карта</a>
        <a href="#">Легенда</a>
        <a href="#">Отчет</a>
        <a href="#">Таблица</a>
        <a href="#">Модули</a>
        <a href="#">Настройки</a>
        <a href="#">Панели</a>
        <a href="#">Окно</a>
        <a href="#">Помощь</a>
    </nav>

    <div class="toolbar">
        <span class="grip grip-first"></span>
        <button type="button" aria-label="Новая таблица"><svg><use href="#i-new"/></svg></button>
        <button type="button" aria-label="Открыть"><svg><use href="#i-open"/></svg></button>
        <button type="button" aria-label="Сохранить"><svg><use href="#i-save"/></svg></button>
        <button type="button" aria-label="Открыть таблицу"><svg><use href="#i-opentab"/></svg></button>
        <button type="button" aria-label="Открыть из базы данных"><svg><use href="#i-dbtab"/></svg></button>
        <button type="button" aria-label="Модули"><svg><use href="#i-puzzle"/></svg></button>
        <span class="sep"></span>
        <button type="button" aria-label="Новая карта"><svg><use href="#i-newmap"/></svg></button>
        <button type="button" aria-label="Новый отчет"><svg><use href="#i-newreport"/></svg></button>
        <button type="button" aria-label="Новый список"><svg><use href="#i-newtab"/></svg></button>
        <span class="sep"></span>
        <button type="button" aria-label="Вставить"><svg><use href="#i-paste"/></svg></button>
        <button type="button" aria-label="Вырезать"><svg><use href="#i-cut"/></svg></button>
        <button type="button" aria-label="Копировать"><svg><use href="#i-copy"/></svg></button>
        <span class="sep"></span>
        <button type="button" aria-label="Отменить"><svg><use href="#i-undo"/></svg></button>
        <button type="button" aria-label="Повторить"><svg><use href="#i-redo"/></svg></button>
        <span class="grip"></span>
        <button type="button" aria-label="Точка"><svg><use href="#i-points"/></svg></button>
        <button type="button" aria-label="Текст"><svg class="glyph-a" viewBox="0 0 30 30"><text x="3" y="28" fill="#c2c2c2" stroke="#929292">A</text></svg></button>
        <button type="button" aria-label="Линия"><svg><use href="#i-line"/></svg></button>
        <button type="button" aria-label="Полигон"><svg><use href="#i-polygon"/></svg></button>
        <button type="button" aria-label="Полилиния"><svg><use href="#i-polyline"/></svg></button>
        <button type="button" aria-label="Область"><svg><use href="#i-region"/></svg></button>
        <button type="button" aria-label="Эллипс"><svg><use href="#i-ellipse"/></svg></button>
        <button type="button" aria-label="Прямоугольник"><svg><use href="#i-rect"/></svg></button>
        <button type="button" aria-label="Скругленный прямоугольник"><svg><use href="#i-rrect"/></svg></button>
        <button type="button" aria-label="Рамка"><svg><use href="#i-frame"/></svg></button>
        <span class="sep"></span>
        <button type="button" aria-label="Стиль точки"><svg><use href="#i-pointstyle"/></svg></button>
        <button type="button" aria-label="Стиль линии"><svg><use href="#i-linestyle"/></svg></button>
        <button type="button" aria-label="Стиль области"><svg><use href="#i-regionstyle"/></svg></button>
        <button type="button" aria-label="Стиль текста"><svg class="glyph-aa" viewBox="0 0 30 30"><text x="1" y="16" fill="#bfe0f5" stroke="#3d7fbb">A</text><text x="9" y="27" fill="#67a9dd" stroke="#2f6ca6">A</text><use href="#p-pencil" x="10" y="9" width="20" height="20"/></svg></button>
        <span class="grip"></span>
        <button type="button" aria-label="Тематика"><svg><use href="#i-thematic"/></svg></button>
        <button type="button" aria-label="Обновить данные"><svg><use href="#i-dbrefresh"/></svg></button>
        <span class="sep"></span>
        <button type="button" aria-label="Шрифт"><svg class="glyph-a" viewBox="0 0 30 30"><text x="3" y="28" fill="#c2c2c2" stroke="#929292">A</text></svg></button>
        <button type="button" aria-label="Найти в таблице"><svg><use href="#i-tabsearch"/></svg></button>
        <span class="sep"></span>
        <button type="button" aria-label="Назад"><svg><use href="#i-tableft"/></svg></button>
        <button type="button" aria-label="Вперед"><svg><use href="#i-tabright"/></svg></button>
        <span class="sep"></span>
        <button type="button" aria-label="Найти в списке"><svg><use href="#i-pintab"/></svg></button>
        <button type="button" aria-label="Найти на карте"><svg><use href="#i-pinmap"/></svg></button>
        <span class="sep"></span>
        <button type="button" aria-label="Запрос"><svg><use href="#i-dbsearch"/></svg></button>
        <button type="button" aria-label="Выбор на карте"><svg><use href="#i-mapsearch"/></svg></button>
        <button type="button" aria-label="Обновить список"><svg><use href="#i-docrefresh"/></svg></button>
        <span class="sep"></span>
        <button type="button" aria-label="Регистрация растра"><svg><use href="#i-warp"/></svg></button>
        <span class="grip"></span>
        <button type="button" aria-label="Контур"><svg><use href="#i-house"/></svg></button>
        <button type="button" aria-label="Узлы"><svg><use href="#i-nodestar"/></svg></button>
        <button type="button" aria-label="Связать"><svg><use href="#i-chain"/></svg></button>
        <span class="sep"></span>
        <button type="button" aria-label="Замкнуть"><svg><use href="#i-polyarrow"/></svg></button>
    </div>

    <div class="toolbar toolbar-map">
        <span class="grip grip-first"></span>
        <button type="button" class="active" aria-label="Выбор"><svg><use href="#i-cursor"/></svg></button>
        <button type="button" aria-label="Выбор в прямоугольнике"><svg><use href="#i-selrect"/></svg></button>
        <button type="button" aria-label="Выбор в круге"><svg><use href="#i-selell"/></svg></button>
        <button type="button" aria-label="Выбор в полигоне"><svg><use href="#i-selpoly"/></svg></button>
        <button type="button" aria-label="Лассо"><svg><use href="#i-lasso"/></svg></button>
        <span class="sep"></span>
        <button type="button" aria-label="Показать выбранное"><svg><use href="#i-zoomsel"/></svg></button>
        <button type="button" aria-label="Увеличить"><svg><use href="#i-zoomin"/></svg></button>
        <button type="button" aria-label="Уменьшить"><svg><use href="#i-zoomout"/></svg></button>
        <button type="button" aria-label="Сдвиг"><svg><use href="#i-hand"/></svg></button>
        <span class="sep"></span>
        <button type="button" aria-label="Отменить выбор"><svg><use href="#i-desel"/></svg></button>
        <button type="button" aria-label="Обратить выбор"><svg><use href="#i-invsel"/></svg></button>
        <button type="button" aria-label="Выбрать все"><svg><use href="#i-selall"/></svg></button>
        <button type="button" aria-label="Информация"><svg><use href="#i-info"/></svg></button>
        <button type="button" aria-label="Подпись"><svg><use href="#i-tagadd"/></svg></button>
        <button type="button" aria-label="Активная ссылка"><svg><use href="#i-hotlink"/></svg></button>
        <button type="button" aria-label="Линейка"><svg><use href="#i-ruler"/></svg></button>
        <span class="grip"></span>
        <button type="button" aria-label="На передний план"><svg><use href="#i-order1"/></svg></button>
        <button type="button" aria-label="Переместить вперед"><svg><use href="#i-order2"/></svg></button>
        <button type="button" aria-label="Переместить назад"><svg><use href="#i-order3"/></svg></button>
        <button type="button" aria-label="На задний план"><svg><use href="#i-order4"/></svg></button>
        <span class="grip"></span>
        <button type="button" aria-label="Показать сетку"><svg><use href="#i-gridok"/></svg></button>
        <button type="button" aria-label="Привязка к сетке"><svg><use href="#i-gridsnap"/></svg></button>
        <button type="button" aria-label="Добавить страницу"><svg><use href="#i-coladd"/></svg></button>
        <button type="button" aria-label="Удалить страницу"><svg><use href="#i-coldel"/></svg></button>
        <button type="button" aria-label="По левому краю"><svg><use href="#i-alleft"/></svg></button>
        <button type="button" aria-label="По правому краю"><svg><use href="#i-alright"/></svg></button>
        <button type="button" aria-label="По центру"><svg><use href="#i-alcenter"/></svg></button>
        <button type="button" aria-label="По середине"><svg><use href="#i-almiddle"/></svg></button>
        <button type="button" aria-label="По верхнему краю"><svg><use href="#i-altop"/></svg></button>
        <button type="button" aria-label="По нижнему краю"><svg><use href="#i-albottom"/></svg></button>
        <span class="grip"></span>
        <button type="button" aria-label="Импорт XML"><svg><use href="#i-xml"/></svg></button>
        <button type="button" aria-label="Редактор отчета"><svg><use href="#i-noteedit"/></svg></button>
    </div>

    <main class="workspace">
        <aside class="docks">
            <section class="dock dock-data">
                <h2 class="dock-title"><span>Открытые данные</span><button type="button" aria-label="Открепить"><svg><use href="#s-float"/></svg></button><button type="button" aria-label="Закрыть"><svg><use href="#s-close"/></svg></button></h2>
                <div class="filter-row">
                    <input type="text" placeholder="Фильтр" aria-label="Фильтр данных">
                    <button type="button" class="sort" aria-label="Сортировка"><span>A</span><span>Z</span><span>Z</span><span>A</span></button>
                </div>
                <ul class="list">
                    <li><svg><use href="#s-image"/></svg>Объекты</li>
                    <li><svg><use href="#s-image"/></svg>Участки</li>
                </ul>
            </section>

            <section class="dock dock-windows">
                <h2 class="dock-title"><span>Окна</span><button type="button" aria-label="Открепить"><svg><use href="#s-float"/></svg></button><button type="button" aria-label="Закрыть"><svg><use href="#s-close"/></svg></button></h2>
                <div class="filter-row">
                    <input type="text" placeholder="Фильтр" aria-label="Фильтр окон">
                    <button type="button" class="sort" aria-label="Сортировка"><span>A</span><span>Z</span><span>Z</span><span>A</span></button>
                </div>
                <ul class="list">
                    <li class="current"><svg><use href="#s-map"/></svg>Карта: Участки,Объекты</li>
                </ul>
            </section>

            <section class="dock dock-layers">
                <h2 class="dock-title"><span>Управление слоями</span><button type="button" aria-label="Открепить"><svg><use href="#s-float"/></svg></button><button type="button" aria-label="Закрыть"><svg><use href="#s-close"/></svg></button></h2>
                <div class="tree">
                    <div class="tree-row tree-root">
                        <span class="arrow"></span>
                        <span class="name">Карта: Участки,Объекты</span>
                        <svg class="eye"><use href="#s-eye"/></svg>
                        <svg class="wand"><use href="#s-wand"/></svg>
                        <span></span>
                        <svg class="tag"><use href="#s-tag"/></svg>
                    </div>
                    <div class="tree-row">
                        <svg class="layer"><use href="#s-cosmetic"/></svg>
                        <span class="name">Косметический</span>
                        <svg class="eye"><use href="#s-eye"/></svg>
                        <svg class="wand"><use href="#s-wand"/></svg>
                        <svg class="edit"><use href="#s-edit"/></svg>
                    </div>
                    <div class="tree-row selected">
                        <svg class="layer"><use href="#s-tablesel"/></svg>
                        <span class="name">Участки</span>
                        <svg class="eye"><use href="#s-eye"/></svg>
                        <svg class="wand"><use href="#s-wand"/></svg>
                        <svg class="edit"><use href="#s-edit"/></svg>
                        <svg class="tag"><use href="#s-tag"/></svg>
                    </div>
                    <div class="tree-row">
                        <svg class="layer"><use href="#s-table"/></svg>
                        <span class="name">Объекты</span>
                        <svg class="eye"><use href="#s-eye"/></svg>
                        <svg class="wand"><use href="#s-wand"/></svg>
                        <svg class="edit"><use href="#s-edit"/></svg>
                        <svg class="tag"><use href="#s-tag"/></svg>
                    </div>
                </div>
                <div class="layer-actions">
                    <button type="button"><svg><use href="#s-down"/></svg>Вниз</button>
                    <button type="button" disabled><svg><use href="#s-up"/></svg>Вверх</button>
                    <button type="button"><svg><use href="#s-layeradd"/></svg>Добавить</button>
                    <button type="button"><svg><use href="#s-layerdel"/></svg>Удалить</button>
                </div>
            </section>
        </aside>

        <div class="mdi">
            <section class="map-window">
                <header class="map-title">
                    <svg class="map-icon"><use href="#s-map"/></svg>
                    <span>Карта: Участки,Объекты</span>
                    <div class="map-controls">
                        <button type="button" aria-label="Свернуть"><svg width="16" height="16"><path d="M4 11.500H12" stroke="#fff" stroke-width="2"/></svg></button>
                        <button type="button" aria-label="Развернуть"><svg width="16" height="16"><path d="M1.500 2V14.500H14.500V2M1 2H15" stroke="#fff" fill="none"/></svg></button>
                        <button type="button" aria-label="Закрыть"><svg width="16" height="16"><path d="M2 2L14 14M14 2L2 14" stroke="#fff" stroke-width="2"/></svg></button>
                    </div>
                </header>
                <div class="map-canvas">
                    <div class="map-edge"></div>
                    <div class="map-page"></div>
                </div>
            </section>
        </div>
    </main>

    <footer class="statusbar">
        <span class="status-cell scale">1:132 675</span>
        <span class="status-cell">Изменяемый слой: Нет</span>
        <span class="status-cell">Выбранный: Нет</span>
        <span class="status-cell"><i class="dot"></i>Узлы: Выкл.</span>
        <button type="button" class="projection">План-схема (метры)</button>
        <span class="status-cell counter">0 <svg><use href="#s-coins"/></svg></span>
    </footer>

    <div class="dialog" role="alertdialog" aria-labelledby="dialogTitle" aria-describedby="dialogText">
        <header class="dialog-title">
            <svg class="app-icon"><use href="#s-app"/></svg>
            <span id="dialogTitle">Ошибка</span>
            <button type="button" aria-label="Закрыть"><svg width="12" height="12"><path d="M0 0L12 12M12 0L0 12" stroke="#fff"/></svg></button>
        </header>
        <div class="dialog-body">
            <svg class="warning"><use href="#s-warning"/></svg>
            <p id="dialogText">IllegalArgumentException: Points of LinearRing do not form a closed linestring</p>
        </div>
        <div class="dialog-buttons">
            <button type="button">OK</button>
        </div>
    </div>
</body>
</html>
```
FILE: styles.css
```css
* {
    box-sizing: border-box;
}
body {
    margin: 0;
    height: 100vh;
    display: flex;
    flex-direction: column;
    overflow: hidden;
    background: #ebebeb;
    color: #111;
    font-family: "Noto Sans", "Open Sans", sans-serif;
    font-size: 14px;
    line-height: 20px;
}
button {
    font: inherit;
    color: inherit;
    padding: 0;
    border: none;
    background: none;
}
button svg {
    display: block;
}
.sprite {
    position: absolute;
}

/* title and menu */
.titlebar {
    flex: none;
    display: flex;
    align-items: center;
    height: 24px;
    padding-bottom: 5px;
    background: #fff;
    color: #8c8c8c;
}
.app-icon {
    width: 20px;
    height: 18px;
}
.titlebar .app-icon {
    margin-left: -4px;
}
.titlebar-text {
    margin-left: 5px;
}
.titlebar-controls {
    display: flex;
    gap: 46px;
    margin-left: auto;
    padding-right: 12px;
}
.menubar {
    flex: none;
    display: flex;
    align-items: center;
    gap: 16px;
    height: 25px;
    padding-left: 5px;
    background: #efefef;
    border-bottom: 1px solid #d2d4d2;
}
.menubar a {
    color: #969696;
    text-decoration: none;
}

/* toolbars */
.toolbar {
    flex: none;
    display: flex;
    align-items: center;
    gap: 1px;
    height: 45px;
    overflow: hidden;
    background: linear-gradient(#fbfbfb, #efefef);
    border-bottom: 1px solid #b4b4b4;
}
.toolbar-map {
    height: 44px;
}
.toolbar button {
    flex: none;
    width: 38px;
    height: 38px;
    padding: 3px;
    border: 1px solid transparent;
    border-radius: 3px;
}
.toolbar button.active {
    background: #dcdcdc;
    border-color: #a3a3a3;
}
.toolbar svg {
    width: 30px;
    height: 30px;
}
.toolbar .glyph-a,
.toolbar .glyph-aa {
    overflow: visible;
    font-family: "Liberation Serif", serif;
    font-style: italic;
    font-weight: bold;
    font-size: 38px;
}
.toolbar .glyph-aa {
    font-size: 24px;
}
.sep {
    flex: none;
    width: 1px;
    height: 24px;
    margin: 0 3px;
    background: #cfcfcf;
}
.grip {
    flex: none;
    width: 5px;
    height: 18px;
    margin: 0 4px 0 8px;
    background: radial-gradient(circle, #aaa 1px, transparent 1px) 0 0 / 2px 3px;
}
.grip-first {
    width: 4px;
    margin: 0 4px 0 0;
}

/* docks */
.workspace {
    flex: 1;
    display: flex;
    min-height: 0;
}
.docks {
    flex: none;
    width: 292px;
    padding: 1px 7px 0 0;
    display: flex;
    flex-direction: column;
}
.dock {
    display: flex;
    flex-direction: column;
}
.dock-data {
    flex: 280;
}
.dock-windows {
    flex: 288;
}
.dock-layers {
    flex: 300;
}
.dock-title {
    display: flex;
    align-items: center;
    gap: 3px;
    height: 19px;
    margin: 0;
    padding-right: 2px;
    background: #bdd0ea;
    font-size: 14px;
    font-weight: normal;
}
.dock-title span {
    flex: 1;
    margin-left: -2px;
}
.dock-title svg {
    width: 11px;
    height: 11px;
}
.filter-row {
    display: flex;
    gap: 7px;
    margin: 9px 9px 7px 3px;
}
.dock-windows .filter-row {
    margin: 11px 11px 8px 5px;
}
.filter-row input {
    flex: 1;
    min-width: 0;
    height: 26px;
    padding: 0 2px;
    border: 1px solid #aaa;
    border-radius: 3px;
    background: #fff;
    font: inherit;
    font-size: 12px;
}
.filter-row input::placeholder {
    color: #808080;
}
.sort {
    display: grid;
    grid-template: 9px 9px / 9px 9px;
    place-content: end center;
    justify-items: center;
    width: 28px;
    height: 26px;
    padding-bottom: 3px;
    border: 1px solid #b1b1b1;
    border-radius: 3px;
    background: linear-gradient(#4a9bd4, #4a9bd4) center 2px / 18px 2px no-repeat #fdfdfd;
    font-family: "Liberation Serif", serif;
    font-size: 9px;
    font-weight: bold;
    line-height: 9px;
}
.sort span {
    color: #3c7fb7;
}
.sort span:nth-child(2),
.sort span:nth-child(3) {
    color: #b53a2c;
}
.list {
    flex: 1;
    margin: 0 9px 17px 3px;
    padding: 1px 3px;
    border: 1px solid #b4b4b4;
    background: #fff;
    list-style: none;
}
.dock-windows .list {
    margin: 0 11px 17px 5px;
}
.list li {
    display: flex;
    align-items: center;
    gap: 6px;
    height: 22px;
}
.list svg {
    width: 16px;
    height: 16px;
}
.list .current {
    font-weight: bold;
}

/* layer tree */
.tree {
    flex: 1;
    margin-top: 11px;
    border: 1px solid #b4b4b4;
    border-left: none;
    background: #fff;
}
.tree-row {
    display: grid;
    grid-template-columns: 48px 22px 82px 34px 34px 28px 1fr;
    align-items: center;
    height: 26px;
}
.tree-root {
    grid-template-columns: 23px 129px 34px 34px 28px 1fr;
    font-weight: bold;
}
.tree-row .layer {
    grid-column: 2;
    width: 15px;
    height: 15px;
}
.tree-row .name {
    overflow: hidden;
    white-space: nowrap;
    text-overflow: ellipsis;
}
.selected {
    background: #b3e2ff;
}
.arrow {
    margin-left: 3px;
    width: 9px;
    height: 6px;
    background: #555;
    clip-path: polygon(0 0, 100% 0, 50% 100%);
}
.eye {
    width: 24px;
    height: 18px;
    margin-left: 8px;
}
.wand {
    width: 24px;
    height: 24px;
    margin-left: 7px;
}
.edit {
    width: 18px;
    height: 18px;
    margin-left: 7px;
}
.tag {
    width: 24px;
    height: 24px;
    margin-left: 8px;
}
.layer-actions {
    display: flex;
    align-items: flex-start;
    height: 65px;
    padding: 10px 0 0 1px;
    gap: 23px;
    font-size: 12px;
}
.layer-actions button {
    display: flex;
    flex-direction: column;
    align-items: center;
    gap: 5px;
}
.layer-actions button:disabled {
    color: #8b8b8b;
}
.layer-actions svg {
    width: 16px;
    height: 16px;
}

/* map window */
.mdi {
    flex: 1;
    min-width: 0;
    display: flex;
    padding: 1px 148px 87px 0;
    background: #b3c6e2;
}
.map-window {
    flex: 1;
    display: flex;
    flex-direction: column;
    border: 1px solid #6f6f6f;
    border-top: none;
    border-radius: 6px 6px 0 0;
    background: #f0f0f0;
}
.map-title {
    display: flex;
    align-items: center;
    height: 30px;
    margin: 0 -1px;
    padding: 0 5px 0 8px;
    border: 1px solid #0a3f70;
    border-radius: 6px 6px 0 0;
    background: linear-gradient(#0a8cf2, #0078d7 50%, #0074d0);
    color: #fff;
}
.map-title > span {
    flex: 1;
    padding-left: 3px;
    text-align: center;
    text-shadow: 1px 1px 0 #0a3f70;
}
.map-icon {
    width: 16px;
    height: 16px;
}
.map-controls {
    display: flex;
    gap: 2px;
}
.map-controls button {
    width: 24px;
    height: 24px;
    padding: 3px;
    border: 1px solid #0a5298;
    border-radius: 3px;
}
.map-canvas {
    flex: 1;
    display: flex;
    margin: 0 4px 4px;
    background: #fff;
}
.map-edge {
    width: 1px;
    margin-top: 50px;
    background: #222;
}
.map-page {
    flex: 1;
    margin: 0 250px 0 296px;
    border: 1px dotted #888;
    border-top: none;
}

/* status bar */
.statusbar {
    flex: none;
    display: flex;
    gap: 7px;
    height: 23px;
    padding-top: 3px;
    overflow: hidden;
    background: #ebebeb;
    font-size: 12px;
}
.status-cell {
    display: flex;
    flex: none;
    align-items: center;
    height: 26px;
    border: 1px solid #b0b0b0;
    white-space: nowrap;
}
.scale {
    margin-left: -3px;
}
.dot {
    width: 8px;
    height: 8px;
    margin: 0 4px;
    border-radius: 50%;
    background: #dd6255;
}
.projection {
    height: 26px;
    margin-left: auto;
    padding: 0 4px;
    border: 1px solid #a9a9a9;
    border-radius: 3px;
    background: #fcfcfc;
}
.counter {
    width: 31px;
    padding-left: 6px;
    overflow: hidden;
}
.counter svg {
    flex: none;
    width: 20px;
    height: 16px;
    margin-left: 6px;
}

/* error dialog */
.dialog {
    position: absolute;
    top: 440px;
    left: 697px;
    width: 502px;
    border: 1px solid #1a68ab;
    background: #f0f0f0;
    color: #000;
    box-shadow: 0 4px 14px rgba(0, 0, 0, .35);
}
.dialog-title {
    display: flex;
    align-items: center;
    gap: 5px;
    height: 31px;
    padding: 0 15px 0 3px;
    background: #0063b1;
    color: #fff;
}
.dialog-title span {
    flex: 1;
}
.dialog-body {
    display: flex;
    gap: 21px;
    padding: 14px 13px 0;
}
.warning {
    flex: none;
    width: 40px;
    height: 40px;
}
.dialog-body p {
    margin: 0;
}
.dialog-buttons {
    display: flex;
    justify-content: flex-end;
    padding: 13px;
}
.dialog-buttons button {
    width: 80px;
    height: 25px;
    border: 1px solid #4a9ce0;
    border-radius: 3px;
    background: linear-gradient(#fff, #e6ebf0);
    font-size: 12px;
}
```
